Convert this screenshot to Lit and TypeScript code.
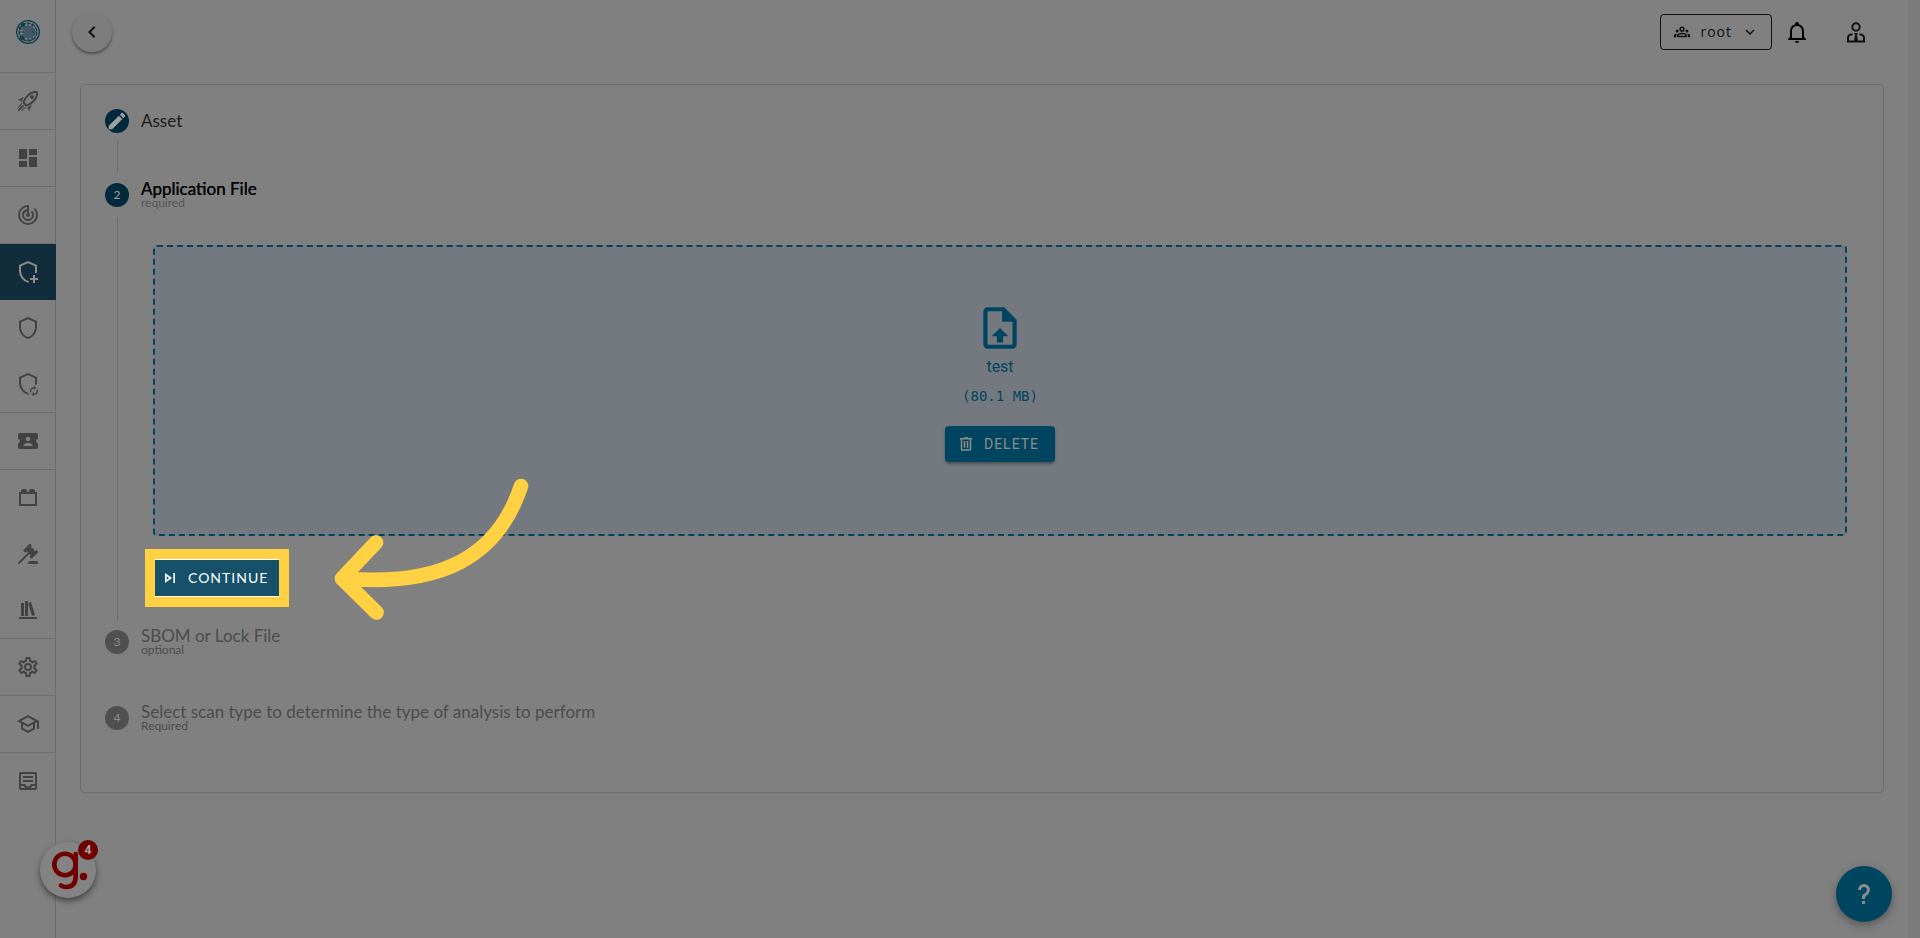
import { LitElement, html, svg, css, nothing } from "lit";
import { customElement } from "lit/decorators.js";
import { classMap } from "lit/directives/class-map.js";

const ICONS = {
  rocket: svg`<path d="M13.13 22.19L11.5 18.36C13.07 17.78 14.54 17 15.9 16.09L13.13 22.19M5.64 12.5L1.81 10.87L7.91 8.1C7 9.46 6.22 10.93 5.64 12.5M19.22 4C19.5 4 19.75 4 19.96 4.05C20.13 5.44 19.94 8.3 16.66 11.58C14.96 13.29 12.93 14.6 10.65 15.47L8.5 13.37C9.42 11.06 10.73 9.03 12.42 7.34C15.18 4.58 17.64 4 19.22 4M19.22 2C17.24 2 14.24 2.69 11 5.93C8.81 8.12 7.5 10.53 6.65 12.64C6.37 13.39 6.56 14.21 7.11 14.77L9.24 16.89C9.62 17.27 10.13 17.5 10.66 17.5C10.89 17.5 11.13 17.44 11.36 17.35C13.5 16.53 15.88 15.19 18.07 13C23.73 7.34 21.61 2.39 21.61 2.39S20.7 2 19.22 2M14.54 9.46C13.76 8.68 13.76 7.41 14.54 6.63S16.59 5.85 17.37 6.63C18.14 7.41 18.15 8.68 17.37 9.46C16.59 10.24 15.32 10.24 14.54 9.46M6.24 22L9.88 18.36C9.54 18.27 9.21 18.12 8.91 17.91L4.83 22H6.24M2 22H3.41L8.18 17.24L6.76 15.83L2 20.59V22M2 19.17L6.09 15.09C5.88 14.79 5.73 14.47 5.64 14.12L2 17.76V19.17Z"/>`,
  dashboard: svg`<path d="M13,3V9H21V3M13,21H21V11H13M3,21H11V15H3M3,13H11V3H3V13Z"/>`,
  radar: svg`<path d="M19.07,4.93L17.66,6.34C19.1,7.79 20,9.79 20,12A8,8 0 0,1 12,20A8,8 0 0,1 4,12C4,7.92 7.05,4.56 11,4.07V6.09C8.16,6.57 6,9.03 6,12A6,6 0 0,0 12,18A6,6 0 0,0 18,12C18,10.34 17.33,8.84 16.24,7.76L14.83,9.17C15.55,9.9 16,10.9 16,12A4,4 0 0,1 12,16A4,4 0 0,1 8,12C8,10.14 9.28,8.59 11,8.14V10.28C10.4,10.63 10,11.26 10,12A2,2 0 0,0 12,14A2,2 0 0,0 14,12C14,11.26 13.6,10.62 13,10.28V2H12A10,10 0 0,0 2,12A10,10 0 0,0 12,22A10,10 0 0,0 22,12C22,9.24 20.88,6.74 19.07,4.93Z"/>`,
  shieldPlus: svg`<g fill="none" stroke="currentColor" stroke-width="2"><path d="M12.6 21.9C8 21.2 4 16.4 4 11.1V5.65L12 2.1L20 5.65V13"/><path d="M18 15V23M14 19H22"/></g>`,
  shield: svg`<path d="M21,11C21,16.55 17.16,21.74 12,23C6.84,21.74 3,16.55 3,11V5L12,1L21,5V11M12,21C15.75,20 19,15.54 19,11.22V6.3L12,3.18L5,6.3V11.22C5,15.54 8.25,20 12,21Z"/>`,
  shieldSync: svg`<g fill="none" stroke="currentColor"><path stroke-width="2" d="M12.6 21.9C8 21.2 4 16.4 4 11.1V5.65L12 2.1L20 5.65V12.5"/><path stroke-width="1.5" d="M14.8 20.2A3.3 3.3 0 0 1 18 15.7M21.2 17.8A3.3 3.3 0 0 1 18 22.3"/></g><path d="M18 13.4V18L20.3 15.7ZM18 20V24.6L15.7 22.3Z"/>`,
  ticket: svg`<path d="M20,12A2,2 0 0,0 22,14V18A2,2 0 0,1 20,20H4A2,2 0 0,1 2,18V14C3.11,14 4,13.1 4,12A2,2 0 0,0 2,10V6A2,2 0 0,1 4,4H20A2,2 0 0,1 22,6V10A2,2 0 0,0 20,12M16.5,16.25C16.5,14.75 13.5,14 12,14C10.5,14 7.5,14.75 7.5,16.25V17H16.5V16.25M12,12.25A2.25,2.25 0 0,0 14.25,10A2.25,2.25 0 0,0 12,7.75A2.25,2.25 0 0,0 9.75,10A2.25,2.25 0 0,0 12,12.25Z"/>`,
  brick: svg`<path d="M19 6V5A2 2 0 0 0 17 3H15A2 2 0 0 0 13 5V6H11V5A2 2 0 0 0 9 3H7A2 2 0 0 0 5 5V6H3V20H21V6M19 18H5V8H19Z"/>`,
  gavel: svg`<path d="M2.3,20.28L11.9,10.68L10.5,9.26L9.78,9.97C9.39,10.36 8.76,10.36 8.37,9.97L7.66,9.26C7.27,8.87 7.27,8.24 7.66,7.85L13.32,2.19C13.71,1.8 14.34,1.8 14.73,2.19L15.44,2.9C15.83,3.29 15.83,3.92 15.44,4.31L14.73,5L16.15,6.43C16.54,6.04 17.17,6.04 17.56,6.43C17.95,6.82 17.95,7.46 17.56,7.85L18.97,9.26L19.68,8.55C20.07,8.16 20.71,8.16 21.1,8.55L21.8,9.26C22.19,9.65 22.19,10.29 21.8,10.68L16.15,16.33C15.76,16.72 15.12,16.72 14.73,16.33L14.03,15.63C13.63,15.24 13.63,14.6 14.03,14.21L14.73,13.5L13.32,12.09L3.71,21.7C3.32,22.09 2.69,22.09 2.3,21.7C1.91,21.31 1.91,20.67 2.3,20.28M20,19A2,2 0 0,1 22,21V22H12V21A2,2 0 0,1 14,19H20Z"/>`,
  books: svg`<path d="M9 3V18H12V3H9M12 5L16 18L19 17L15 4L12 5M5 5V18H8V5H5M3 19V21H21V19H3Z"/>`,
  cog: svg`<path d="M12,8A4,4 0 0,1 16,12A4,4 0 0,1 12,16A4,4 0 0,1 8,12A4,4 0 0,1 12,8M12,10A2,2 0 0,0 10,12A2,2 0 0,0 12,14A2,2 0 0,0 14,12A2,2 0 0,0 12,10M10,22C9.75,22 9.54,21.82 9.5,21.58L9.13,18.93C8.5,18.68 7.96,18.34 7.44,17.94L4.95,18.95C4.73,19.03 4.46,18.95 4.34,18.73L2.34,15.27C2.21,15.05 2.27,14.78 2.46,14.63L4.57,12.97L4.5,12L4.57,11L2.46,9.37C2.27,9.22 2.21,8.95 2.34,8.73L4.34,5.27C4.46,5.05 4.73,4.96 4.95,5.05L7.44,6.05C7.96,5.66 8.5,5.32 9.13,5.07L9.5,2.42C9.54,2.18 9.75,2 10,2H14C14.25,2 14.46,2.18 14.5,2.42L14.87,5.07C15.5,5.32 16.04,5.66 16.56,6.05L19.05,5.05C19.27,4.96 19.54,5.05 19.66,5.27L21.66,8.73C21.79,8.95 21.73,9.22 21.54,9.37L19.43,11L19.5,12L19.43,13L21.54,14.63C21.73,14.78 21.79,15.05 21.66,15.27L19.66,18.73C19.54,18.95 19.27,19.04 19.05,18.95L16.56,17.95C16.04,18.34 15.5,18.68 14.87,18.93L14.5,21.58C14.46,21.82 14.25,22 14,22H10M11.25,4L10.88,6.61C9.68,6.86 8.62,7.5 7.85,8.39L5.44,7.35L4.69,8.65L6.8,10.2C6.4,11.37 6.4,12.64 6.8,13.8L4.68,15.36L5.43,16.66L7.86,15.62C8.63,16.5 9.68,17.14 10.87,17.38L11.24,20H12.76L13.13,17.39C14.32,17.14 15.37,16.5 16.14,15.62L18.57,16.66L19.32,15.36L17.2,13.81C17.6,12.64 17.6,11.37 17.2,10.2L19.31,8.65L18.56,7.35L16.15,8.39C15.38,7.5 14.32,6.86 13.12,6.62L12.75,4H11.25Z"/>`,
  school: svg`<path d="M12 3L1 9L5 11.18V17.18L12 21L19 17.18V11.18L21 10.09V17H23V9L12 3M18.82 9L12 12.72L5.18 9L12 5.28L18.82 9M17 16L12 18.72L7 16V12.27L12 15L17 12.27V16Z"/>`,
  tray: svg`<g fill="none" stroke="currentColor" stroke-width="2"><rect x="4" y="4" width="16" height="16" rx="1"/><path d="M4 16H8.5Q9 18.5 12 18.5T15.5 16H20M7 8H17M7 12H17"/></g>`,
  back: svg`<path d="M15.41,16.58L10.83,12L15.41,7.41L14,6L8,12L14,18L15.41,16.58Z"/>`,
  down: svg`<path d="M7.41,8.58L12,13.17L16.59,8.58L18,10L12,16L6,10L7.41,8.58Z"/>`,
  group: svg`<g fill="none" stroke="currentColor" stroke-width="2"><circle cx="12" cy="8.2" r="2.5"/><path d="M6.5 18V16.6Q6.5 14 12 14T17.500 16.600V18Z"/></g><circle cx="5.500" cy="10.500" r="2"/><circle cx="18.500" cy="10.500" r="2"/><path d="M1 19V17Q1 14.300 5.200 14.300Q4.200 15.500 4.200 19ZM23 19V17Q23 14.300 18.800 14.300Q19.800 15.500 19.800 19Z"/>`,
  bell: svg`<path d="M10 21H14C14 22.1 13.1 23 12 23S10 22.1 10 21M21 19V20H3V19L5 17V11C5 7.9 7 5.2 10 4.3V4C10 2.9 10.9 2 12 2S14 2.9 14 4V4.3C17 5.2 19 7.9 19 11V17L21 19M17 11C17 8.2 14.8 6 12 6S7 8.2 7 11V18H17V11Z"/>`,
  user: svg`<g fill="none" stroke="currentColor" stroke-width="2"><circle cx="12" cy="7" r="3.700"/><path d="M8.500 14.200Q4 14.800 4 17.500V21.500H20V17.500Q20 14.800 15.500 14.200"/></g><path d="M10 13H14L13 15L14 21H10L11 15Z"/>`,
  pencil: svg`<path d="M20.71,7.04C21.1,6.65 21.1,6 20.71,5.63L18.37,3.29C18,2.9 17.35,2.9 16.96,3.29L15.12,5.12L18.87,8.87M3,17.25V21H6.75L17.81,9.93L14.06,6.18L3,17.25Z"/>`,
  file: svg`<path d="M14,2L20,8V20A2,2 0 0,1 18,22H6A2,2 0 0,1 4,20V4A2,2 0 0,1 6,2H14M18,20V9H13V4H6V20H18M12,12L16,16H13.5V19H10.5V16H8L12,12Z"/>`,
  trash: svg`<path d="M9,3V4H4V6H5V19A2,2 0 0,0 7,21H17A2,2 0 0,0 19,19V6H20V4H15V3H9M7,6H17V19H7V6M9,8V17H11V8H9M13,8V17H15V8H13Z"/>`,
  next: svg`<path fill-rule="evenodd" d="M6,18L14.5,12L6,6ZM8,9.86L11.03,12L8,14.14ZM16,6H18V18H16Z"/>`,
  help: svg`<path d="M10,19H13V22H10V19M12,2C17.35,2.22 19.68,7.62 16.5,11.67C15.67,12.67 14.33,13.33 13.67,14.17C13,15 13,16 13,17H10C10,15.33 10,13.92 10.67,12.92C11.33,11.92 12.67,11.33 13.5,10.67C15.92,8.43 15.32,5.26 12,5A3,3 0 0,0 9,8H6A6,6 0 0,1 12,2Z"/>`,
};

type IconName = keyof typeof ICONS;

const icon = (name: IconName, size = 24) =>
  html`<svg width=${size} height=${size} viewBox="0 0 24 24" fill="currentColor" aria-hidden="true">${ICONS[name]}</svg>`;

interface NavItem {
  icon: IconName;
  label: string;
  divided?: boolean;
  active?: boolean;
}

const NAV: NavItem[] = [
  { icon: "rocket", label: "Get started", divided: true },
  { icon: "dashboard", label: "Dashboard", divided: true },
  { icon: "radar", label: "Monitoring", divided: true },
  { icon: "shieldPlus", label: "New scan", divided: true, active: true },
  { icon: "shield", label: "Scans" },
  { icon: "shieldSync", label: "Recurring scans" },
  { icon: "ticket", label: "Tickets", divided: true },
  { icon: "brick", label: "Integrations", divided: true },
  { icon: "gavel", label: "Policies" },
  { icon: "books", label: "Library" },
  { icon: "cog", label: "Settings", divided: true },
  { icon: "school", label: "Learning", divided: true },
  { icon: "tray", label: "Reports", divided: true },
];

@customElement("nav-rail")
export class NavRail extends LitElement {
  static styles = css`
    :host { display: block; box-sizing: border-box; border-right: 1px solid #6e6e6e; color: #424242; }
    svg { display: block; }
    .logo { display: flex; justify-content: center; align-items: center; height: 64px; margin-bottom: 8px; margin-right: -1px; }
    .item { display: flex; justify-content: center; align-items: center; height: 56px; color: inherit; margin-right: -1px; }
    .divided { border-top: 1px solid #6e6e6e; }
    .active { background: #112d3b; color: #8c8c8c; }
  `;
  render() {
    return html`
      <div class="logo">
        <svg width="24" height="24" viewBox="0 0 24 24" fill="none" stroke="#173f50">
          <circle cx="12" cy="12" r="11.300" stroke-width="1.400" />
          <circle cx="12" cy="12" r="8.800" stroke-width="1.500" stroke-dasharray="4 1" />
          <path stroke-width="1.200" d="M8 4V20M10 6V18M12 3V21M14 6V18M16 4V20M18 8V16M3 12H8M16 12H21M4 9H7M4 15H7" />
          <g fill="#173f50" stroke="none"><circle cx="7" cy="5" r="2.200" /><circle cx="6" cy="18" r="2.200" /><circle cx="4" cy="8" r="1.500" /></g>
        </svg>
      </div>
      <nav>
        ${NAV.map((n) => html`<a href="#" aria-label=${n.label} class=${classMap({ item: true, divided: !!n.divided, active: !!n.active })}>${icon(n.icon)}</a>`)}
      </nav>
    `;
  }
}

@customElement("file-drop")
export class FileDrop extends LitElement {
  static styles = css`
    :host { display: flex; flex-direction: column; align-items: center; box-sizing: border-box; padding: 56px 16px 72px; border: 2px dashed #00455f; border-radius: 4px; background: #747980; color: #00455f; }
    svg { display: block; }
    .name { font: 16px/24px Roboto, sans-serif; margin-top: 2px; }
    .size { font: 14px/20px "DejaVu Sans Mono", monospace; margin-top: 7px; }
    .delete { display: flex; align-items: center; gap: 9px; height: 36px; margin-top: 20px; padding: 0 16px 0 12px; border: 0; border-radius: 4px; background: #00455f; color: #8c8c8c; font: 400 14px/20px Roboto, sans-serif; letter-spacing: 1px; box-shadow: 0 2px 3px rgba(0, 0, 0, 0.35); }
  `;
  render() {
    return html`
      ${icon("file", 50)}
      <div class="name">test</div>
      <div class="size">(80.1 MB)</div>
      <button class="delete">${icon("trash", 18)}DELETE</button>
    `;
  }
}

@customElement("scan-stepper")
export class ScanStepper extends LitElement {
  static styles = css`
    :host { display: block; box-sizing: border-box; border: 1px solid #6e6e6e; border-radius: 4px; padding-bottom: 44px; font-family: Lato, sans-serif; }
    svg { display: block; }
    .step { display: flex; align-items: center; gap: 12px; padding: 24px 24px 16px; color: #4c4c4c; }
    .mark { display: flex; justify-content: center; align-items: center; width: 24px; height: 24px; border-radius: 50%; background: #505050; color: #8c8c8c; font-size: 12px; line-height: 16px; }
    .title { font-size: 17px; line-height: 16px; }
    .note { font-size: 12px; line-height: 12px; }
    .done, .current { color: #1c1c1c; }
    .current .title { color: #000; text-shadow: 0 0 0 #000; }
    .current .note { color: #565656; }
    .done .mark, .current .mark { background: #00293b; color: #a0a0a0; }
    .content { margin: -8px 36px -16px 36px; border-left: 1px solid #6e6e6e; min-height: 32px; }
    .open { padding: 28px 0 13px 35px; }
    .gap { height: 8px; }
    .spotlight { position: relative; display: flex; width: fit-content; margin: 13px 0 0 -8px; border: 10px solid #ffd143; background: #fff; padding: 1px 0; }
    .continue { display: flex; align-items: center; gap: 8px; height: 36px; padding: 0 11px 0 5px; border: 0; background: #175069; color: #fff; font: 14px/20px Lato, sans-serif; letter-spacing: 1px; }
    .arrow { position: absolute; left: 178px; top: -82px; pointer-events: none; }
  `;

  private step(mark: unknown, title: string, note = "", state = "") {
    return html`
      <div class="step ${state}">
        <span class="mark">${mark}</span>
        <div>
          <div class="title">${title}</div>
          ${note ? html`<div class="note">${note}</div>` : nothing}
        </div>
      </div>
    `;
  }

  render() {
    return html`
      ${this.step(icon("pencil", 22), "Asset", "", "done")}
      <div class="content"></div>
      ${this.step("2", "Application File", "required", "current")}
      <div class="content open">
        <file-drop></file-drop>
        <div class="spotlight">
          <button class="continue">${icon("next", 20)}CONTINUE</button>
          <svg class="arrow" width="200" height="150" viewBox="0 0 200 150" fill="none" stroke="#ffd143" stroke-width="14.700" stroke-linecap="round" stroke-linejoin="round" aria-hidden="true">
            <path d="M188 9C165 79 110 110 9 101.500M43 65.500L9 101.500L43.500 135.500" />
          </svg>
        </div>
      </div>
      ${this.step("3", "SBOM or Lock File", "optional")}
      <div class="gap"></div>
      ${this.step("4", "Select scan type to determine the type of analysis to perform", "Required")}
    `;
  }
}

@customElement("app-root")
export class AppRoot extends LitElement {
  static styles = css`
    :host { display: grid; grid-template-columns: 56px 1fr; box-sizing: border-box; min-height: 100vh; background: #808080; border-right: 12px solid #7b7b7b; font-family: Lato, sans-serif; }
    svg { display: block; }
    button { border: 0; padding: 0; background: none; color: #111; }
    .bar { display: flex; align-items: center; height: 64px; padding: 0 40px 0 16px; }
    .back { display: flex; justify-content: center; align-items: center; width: 40px; height: 40px; margin-right: auto; border-radius: 50%; background: #7d7d7d; box-shadow: 0 2px 3px rgba(0, 0, 0, 0.4); }
    .team { display: flex; align-items: center; gap: 9px; height: 36px; padding: 0 12px; border: 1px solid #111; border-radius: 4px; font: 14px/20px "Open Sans", sans-serif; letter-spacing: 1px; }
    .bell { margin: 0 35px 0 13px; color: #000; }
    .main { padding: 20px 24px; }
    .guide { position: fixed; left: 40px; bottom: 40px; width: 56px; height: 56px; border-radius: 50%; background: #838383; box-shadow: 0 3px 6px rgba(0, 0, 0, 0.5); }
    .count { position: absolute; right: -2px; top: -2px; width: 20px; height: 20px; border-radius: 50%; background: #700000; color: #a8a8a8; font: bold 12px/20px Roboto, sans-serif; text-align: center; }
    .help { position: fixed; right: 28px; bottom: 16px; display: flex; justify-content: center; align-items: center; width: 56px; height: 56px; border-radius: 50%; background: #00455f; color: #8c8c8c; box-shadow: 0 3px 8px rgba(0, 0, 0, 0.35); }
  `;
  render() {
    return html`
      <nav-rail></nav-rail>
      <div>
        <header class="bar">
          <button class="back" aria-label="Back">${icon("back")}</button>
          <button class="team">${icon("group", 18)}root${icon("down", 18)}</button>
          <button class="bell" aria-label="Notifications">${icon("bell")}</button>
          <button aria-label="Account">${icon("user")}</button>
        </header>
        <main class="main"><scan-stepper></scan-stepper></main>
      </div>
      <button class="guide" aria-label="Guides">
        <svg width="56" height="56" viewBox="0 0 56 56" fill="none" stroke="#700000" stroke-width="4.600" stroke-linecap="round" aria-hidden="true">
          <circle cx="25" cy="22.500" r="10.700" />
          <path d="M35.700 12V34Q35.700 45 26 45Q23 45 21 43.500" />
          <circle cx="43.500" cy="34.500" r="3.700" fill="#700000" stroke="none" />
        </svg>
        <span class="count">4</span>
      </button>
      <button class="help" aria-label="Help">${icon("help")}</button>
    `;
  }
}
